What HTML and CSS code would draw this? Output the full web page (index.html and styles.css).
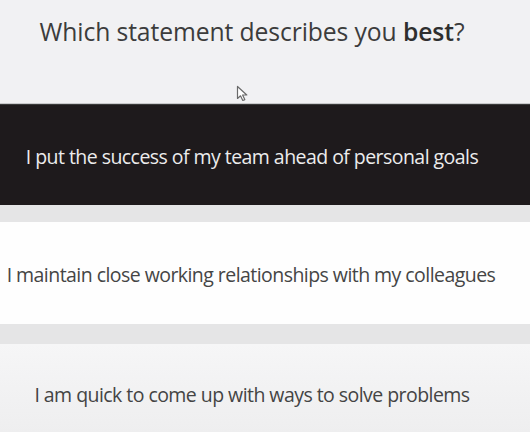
FILE: index.html
```html
<!DOCTYPE html>
<html lang="en">
<head>
<meta charset="utf-8">
<title>Which statement describes you best?</title>
<link rel="stylesheet" href="styles.css">
</head>
<body>
<main class="quiz">
  <header class="quiz-head">
    <h1 class="question">Which statement describes you <b>best</b>?</h1>
    <svg class="cursor" width="13" height="17" viewBox="0 0 13 17" aria-hidden="true">
      <path d="M1.5 1.5 L1.5 13.5 L4.5 10.8 L6.8 15.5 L8.8 14.6 L6.6 10 L10.8 10 Z" fill="#fff" stroke="#6a6a6a" stroke-width="1.2" stroke-linejoin="round"/>
    </svg>
  </header>
  <ul class="options">
    <li class="option option-selected">I put the success of my team ahead of personal goals</li>
    <li class="option option-white">I maintain close working relationships with my colleagues</li>
    <li class="option option-grey">I am quick to come up with ways to solve problems</li>
  </ul>
</main>
</body>
</html>
```
FILE: styles.css
```css
html, body {
  margin: 0;
  padding: 0;
}
body {
  width: 530px;
  height: 432px;
  overflow: hidden;
  background: #e5e5e6;
  font-family: "Open Sans", "Noto Sans", sans-serif;
}
.quiz {
  display: flex;
  flex-direction: column;
}
.quiz-head {
  position: relative;
  height: 104px;
  background: #f1f1f3;
  border-bottom: 1px solid #c9c9cb;
  padding-right: 26px;
  box-sizing: border-box;
}
.question {
  margin: 0;
  padding-top: 15px;
  text-align: center;
  font-size: 24.7px;
  font-weight: 400;
  color: #3c3c3c;
  line-height: 34px;
  letter-spacing: -0.1px;
}
.question b {
  font-weight: 600;
  color: #2e2e2e;
}
.cursor {
  position: absolute;
  left: 236px;
  top: 85px;
}
.options {
  list-style: none;
  margin: 0;
  padding: 0;
  display: flex;
  flex-direction: column;
  gap: 17px;
}
.option {
  height: 100px;
  display: flex;
  align-items: center;
  justify-content: center;
  padding-right: 26px;
  font-size: 19.5px;
  letter-spacing: -0.55px;
  white-space: nowrap;
}
.option-selected {
  height: 101px;
  background: #1e1a1c;
  color: #ececec;
  border-top: 1px solid #3a3a3a;
  box-sizing: border-box;
  padding-top: 2px;
}
.option-white {
  background: #fefefe;
  color: #454545;
  padding-right: 28px;
  padding-top: 2px;
}
.option-grey {
  margin-top: 3px;
  height: 100px;
  background: linear-gradient(#f6f6f7, #ededee);
  color: #444;
}
```
